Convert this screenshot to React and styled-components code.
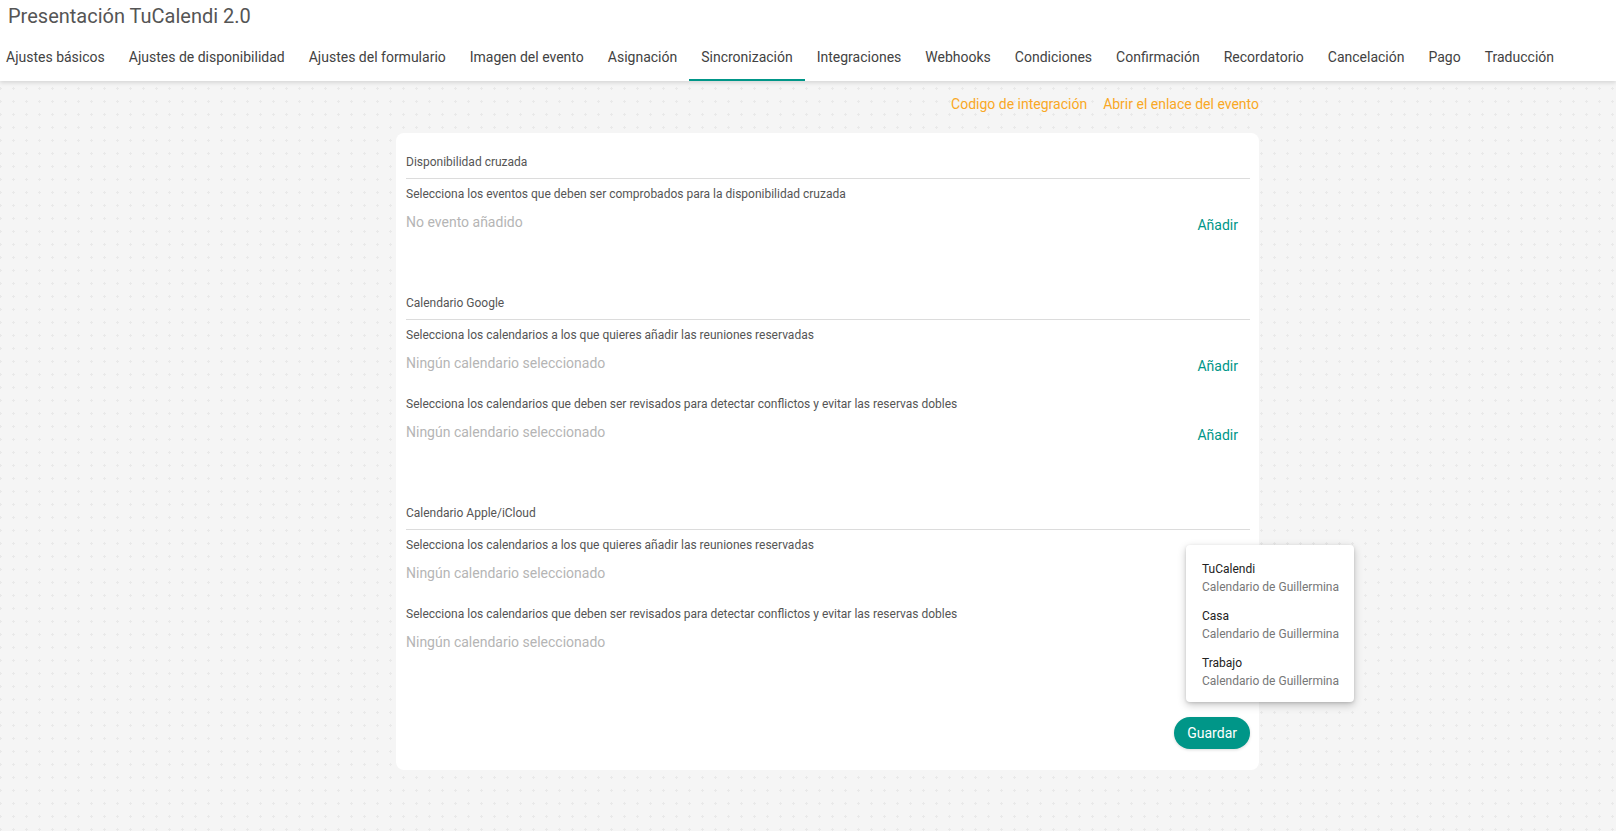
import React from 'react'
import styled, { createGlobalStyle } from 'styled-components'

const GlobalStyle = createGlobalStyle`
html, body {
  margin: 0;
  padding: 0;
}
body {
  font-family: Roboto, "Liberation Sans", Arial, sans-serif;
  background-color: #f5f5f5;
  background-image: radial-gradient(circle, #e9e9e9 1px, transparent 1.2px);
  background-size: 13px 13px;
  background-position: 7px 4px;
  min-height: 831px;
}
`

const Header = styled.header`
background-color: white;
box-shadow: 0 2px 4px rgba(0, 0, 0, 0.12);
position: relative;
z-index: 1;
`
const Title = styled.h1`
margin: 0;
padding: 4px 8px 5px;
font-size: 20px;
line-height: 24px;
font-weight: 400;
color: #555;
`
const Tabs = styled.nav`
display: flex;
margin-left: -6px;
`
const Tab = styled.div`
height: 48px;
padding: 0 12px;
display: flex;
align-items: center;
font-size: 14px;
color: #424242;
box-sizing: border-box;
border-bottom: 2px solid ${(p) => (p.$active ? '#009688' : 'transparent')};
padding-top: 1px;
white-space: nowrap;
`

const Main = styled.main`
width: 863px;
margin-left: 396px;
padding-top: 13px;
padding-bottom: 60px;
`
const Links = styled.div`
display: flex;
justify-content: flex-end;
gap: 16px;
margin-bottom: 19px;
a {
  font-size: 14px;
  line-height: 20px;
  color: #f9a825;
  text-decoration: none;
}
`
const Card = styled.div`
background-color: white;
border-radius: 8px;
padding: 21px 9px 21px 10px;
position: relative;
`
const Section = styled.section`
margin-top: ${(p) => (p.$first ? '0' : '52px')};
`
const SectionTitle = styled.div`
font-size: 12px;
line-height: 16px;
color: #555;
padding-bottom: 8px;
border-bottom: 1px solid #dcdcdc;
margin-bottom: 7px;
`
const Label = styled.div`
font-size: 12px;
line-height: 16px;
color: #555;
margin-top: ${(p) => (p.$first ? '0' : '12px')};
`
const Row = styled.div`
display: flex;
justify-content: space-between;
align-items: flex-start;
margin-top: 5px;
height: 36px;
`
const Empty = styled.div`
padding-top: 5px;
font-size: 14px;
line-height: 20px;
color: #b5b5b5;
`
const AddButton = styled.button`
border: none;
background: none;
height: 36px;
padding: 0 12px;
font-family: inherit;
font-size: 14px;
color: #009688;
cursor: pointer;
`
const Footer = styled.div`
display: flex;
justify-content: flex-end;
margin-top: 54px;
`
const SaveButton = styled.button`
border: none;
background-color: #009688;
color: white;
height: 32px;
padding: 0 13px;
border-radius: 16px;
font-family: inherit;
font-size: 14px;
box-shadow: 0 1px 3px rgba(0, 0, 0, 0.15);
`
const Menu = styled.div`
position: absolute;
left: 790px;
top: 412px;
width: 168px;
box-sizing: border-box;
padding: 9px 0 7px;
background-color: white;
border-radius: 4px;
box-shadow: 0 3px 8px rgba(0, 0, 0, 0.22), 0 1px 3px rgba(0, 0, 0, 0.12);
`
const MenuItem = styled.div`
padding: 7px 16px 6px;
font-size: 12px;
line-height: 16px;
white-space: nowrap;
.name {
  color: #222;
}
.owner {
  color: #777;
  margin-top: 2px;
}
`

const tabs = [
  'Ajustes básicos',
  'Ajustes de disponibilidad',
  'Ajustes del formulario',
  'Imagen del evento',
  'Asignación',
  'Sincronización',
  'Integraciones',
  'Webhooks',
  'Condiciones',
  'Confirmación',
  'Recordatorio',
  'Cancelación',
  'Pago',
  'Traducción',
]

const sections = [
  {
    title: 'Disponibilidad cruzada',
    rows: [{ label: 'Selecciona los eventos que deben ser comprobados para la disponibilidad cruzada', empty: 'No evento añadido', add: true }],
  },
  {
    title: 'Calendario Google',
    rows: [
      { label: 'Selecciona los calendarios a los que quieres añadir las reuniones reservadas', empty: 'Ningún calendario seleccionado', add: true },
      { label: 'Selecciona los calendarios que deben ser revisados para detectar conflictos y evitar las reservas dobles', empty: 'Ningún calendario seleccionado', add: true },
    ],
  },
  {
    title: 'Calendario Apple/iCloud',
    rows: [
      { label: 'Selecciona los calendarios a los que quieres añadir las reuniones reservadas', empty: 'Ningún calendario seleccionado', add: false },
      { label: 'Selecciona los calendarios que deben ser revisados para detectar conflictos y evitar las reservas dobles', empty: 'Ningún calendario seleccionado', add: false },
    ],
  },
]

const calendars = ['TuCalendi', 'Casa', 'Trabajo']

const App = () => {
  return (
    <>
      <GlobalStyle />
      <Header>
        <Title>Presentación TuCalendi 2.0</Title>
        <Tabs>
          {tabs.map((t) => (
            <Tab key={t} $active={t === 'Sincronización'}>{t}</Tab>
          ))}
        </Tabs>
      </Header>

      <Main>
        <Links>
          <a href="#">Codigo de integración</a>
          <a href="#">Abrir el enlace del evento</a>
        </Links>
        <Card>
          {sections.map((s, i) => (
            <Section key={s.title} $first={i === 0}>
              <SectionTitle>{s.title}</SectionTitle>
              {s.rows.map((r, j) => (
                <div key={j}>
                  <Label $first={j === 0}>{r.label}</Label>
                  <Row>
                    <Empty>{r.empty}</Empty>
                    {r.add && <AddButton>Añadir</AddButton>}
                  </Row>
                </div>
              ))}
            </Section>
          ))}
          <Footer>
            <SaveButton>Guardar</SaveButton>
          </Footer>
          <Menu>
            {calendars.map((c) => (
              <MenuItem key={c}>
                <div className="name">{c}</div>
                <div className="owner">Calendario de Guillermina</div>
              </MenuItem>
            ))}
          </Menu>
        </Card>
      </Main>
    </>
  )
}

export default App
